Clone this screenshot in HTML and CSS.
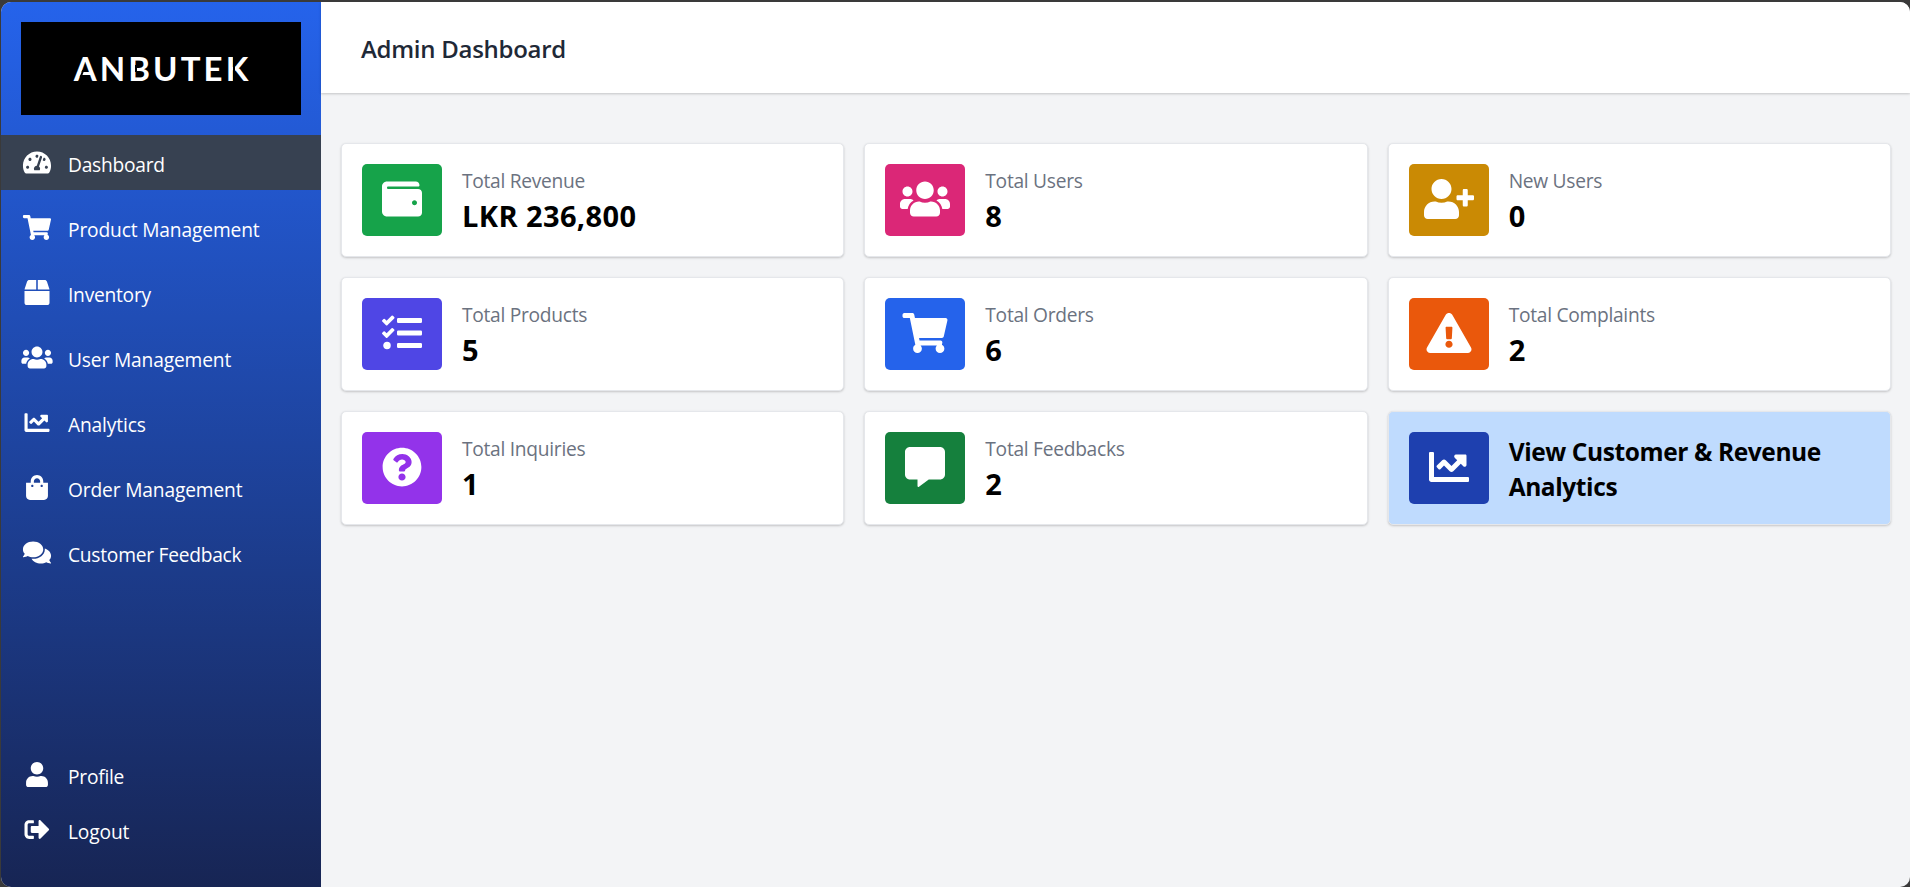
FILE: index.html
```html
<!DOCTYPE html>
<html lang="en">
<head>
<meta charset="utf-8">
<title>Admin Dashboard</title>
<link rel="stylesheet" href="styles.css">
</head>
<body>
<svg class="sprite" aria-hidden="true">
  <symbol id="gauge" viewBox="0 0 576 512"><path d="M288 32C128.94 32 0 160.94 0 320c0 52.8 14.25 102.26 39.06 144.8 5.61 9.62 16.3 15.2 27.44 15.2h443c11.14 0 21.83-5.58 27.44-15.2C561.75 422.26 576 372.8 576 320c0-159.06-128.94-288-288-288zm0 64c14.71 0 26.58 10.13 30.32 23.65-1.11 2.26-2.64 4.23-3.45 6.67l-9.22 27.67c-5.13 3.49-10.97 6.01-17.64 6.01-17.67 0-32-14.33-32-32S270.33 96 288 96zM96 384c-17.67 0-32-14.33-32-32s14.33-32 32-32 32 14.33 32 32-14.33 32-32 32zm48-160c-17.67 0-32-14.33-32-32s14.33-32 32-32 32 14.33 32 32-14.33 32-32 32zm246.77-72.41l-61.33 184C343.13 347.33 352 364.54 352 384c0 11.72-3.38 22.55-8.88 32H232.88c-5.5-9.45-8.88-20.28-8.88-32 0-33.94 26.5-61.43 59.9-63.59l61.34-184.01c4.17-12.56 17.73-19.45 30.36-15.17 12.57 4.19 19.35 17.79 15.17 30.36zm14.66 57.2l15.52-46.55c3.47-1.29 7.13-2.23 11.05-2.23 17.67 0 32 14.33 32 32s-14.33 32-32 32c-11.38-.01-20.89-6.28-26.57-15.22zM480 384c-17.67 0-32-14.33-32-32s14.33-32 32-32 32 14.33 32 32-14.33 32-32 32z"/></symbol>
  <symbol id="cart" viewBox="0 0 576 512"><path d="M528.12 301.319l47.273-208C578.806 78.301 567.391 64 551.99 64H159.208l-9.166-44.81C147.758 8.021 137.93 0 126.529 0H24C10.745 0 0 10.745 0 24v16c0 13.255 10.745 24 24 24h69.883l70.248 343.435C147.325 417.1 136 435.222 136 456c0 30.928 25.072 56 56 56s56-25.072 56-56c0-15.674-6.447-29.835-16.824-40h209.647C430.447 426.165 424 440.326 424 456c0 30.928 25.072 56 56 56s56-25.072 56-56c0-22.172-12.888-41.332-31.579-50.405l5.517-24.276c3.413-15.018-8.002-29.319-23.403-29.319H218.117l-6.545-32h293.145c11.206 0 20.92-7.754 23.403-18.681z"/></symbol>
  <symbol id="box" viewBox="0 0 512 512"><path d="M509.5 184.6L458.9 32.8C452.4 13.2 434.1 0 413.4 0H272v192h238.7c-.4-2.5-.4-5-1.2-7.4zM240 0H98.6c-20.7 0-39 13.2-45.5 32.8L2.5 184.6c-.8 2.4-.8 4.9-1.2 7.4H240V0zM0 224v240c0 26.5 21.5 48 48 48h416c26.5 0 48-21.5 48-48V224H0z"/></symbol>
  <symbol id="users" viewBox="0 0 640 512"><path d="M96 224c35.3 0 64-28.7 64-64s-28.7-64-64-64-64 28.7-64 64 28.7 64 64 64zm448 0c35.3 0 64-28.7 64-64s-28.7-64-64-64-64 28.7-64 64 28.7 64 64 64zm32 32h-64c-17.6 0-33.5 7.1-45.1 18.6 40.3 22.1 68.9 62 75.1 109.4h66c17.7 0 32-14.3 32-32v-32c0-35.3-28.7-64-64-64zm-256 0c61.9 0 112-50.1 112-112S381.9 32 320 32 208 82.1 208 144s50.1 112 112 112zm76.8 32h-8.3c-20.8 10-43.9 16-68.5 16s-47.6-6-68.5-16h-8.3C179.6 288 128 339.6 128 403.2V432c0 26.5 21.5 48 48 48h288c26.5 0 48-21.5 48-48v-28.8c0-63.6-51.6-115.2-115.2-115.2zm-223.7-13.4C161.5 263.1 145.6 256 128 256H64c-35.3 0-64 28.7-64 64v32c0 17.7 14.3 32 32 32h65.9c6.3-47.4 34.9-87.3 75.2-109.4z"/></symbol>
  <symbol id="chart" viewBox="0 0 512 512"><path d="M496 384H64V80c0-8.84-7.16-16-16-16H16C7.16 64 0 71.16 0 80v336c0 17.67 14.33 32 32 32h464c8.84 0 16-7.16 16-16v-32c0-8.84-7.16-16-16-16zM464 96H345.94c-21.38 0-32.09 25.85-16.97 40.97l32.4 32.4L288 242.75l-73.37-73.37c-12.5-12.5-32.76-12.5-45.25 0l-68.69 68.69c-6.25 6.25-6.25 16.38 0 22.63l22.62 22.62c6.25 6.25 16.38 6.25 22.63 0L192 237.25l73.37 73.37c12.5 12.5 32.76 12.5 45.25 0l96-96 32.4 32.4c15.12 15.12 40.97 4.41 40.97-16.97V112c.01-8.84-7.15-16-15.99-16z"/></symbol>
  <symbol id="bag" viewBox="0 0 448 512"><path d="M352 160v-32C352 57.42 294.579 0 224 0 153.42 0 96 57.42 96 128v32H0v272c0 44.183 35.817 80 80 80h288c44.183 0 80-35.817 80-80V160h-96zm-192-32c0-35.29 28.71-64 64-64s64 28.71 64 64v32H160v-32zm160 120c-13.255 0-24-10.745-24-24s10.745-24 24-24 24 10.745 24 24-10.745 24-24 24zm-192 0c-13.255 0-24-10.745-24-24s10.745-24 24-24 24 10.745 24 24-10.745 24-24 24z"/></symbol>
  <symbol id="comments" viewBox="0 0 576 512"><path d="M416 192c0-88.4-93.1-160-208-160S0 103.6 0 192c0 34.3 14.1 65.9 38 92-13.4 30.2-35.5 54.2-35.8 54.5-2.2 2.3-2.8 5.7-1.5 8.7S4.8 352 8 352c36.6 0 66.9-12.3 88.7-25 32.2 15.7 70.3 25 111.3 25 114.9 0 208-71.6 208-160zm122 220c23.9-26 38-57.7 38-92 0-66.9-53.5-124.2-129.3-148.1.9 6.6 1.3 13.3 1.3 20.1 0 105.9-107.7 192-240 192-10.8 0-21.3-.8-31.7-1.9C207.8 439.6 281.8 480 368 480c41 0 79.1-9.2 111.3-25 21.8 12.7 52.1 25 88.7 25 3.2 0 6.1-1.9 7.3-4.8 1.3-2.9.7-6.3-1.5-8.7-.3-.3-22.4-24.2-35.8-54.5z"/></symbol>
  <symbol id="user" viewBox="0 0 448 512"><path d="M224 256c70.7 0 128-57.3 128-128S294.7 0 224 0 96 57.3 96 128s57.3 128 128 128zm89.6 32h-16.7c-22.2 10.2-46.9 16-72.9 16s-50.6-5.8-72.9-16h-16.7C60.2 288 0 348.2 0 422.4V464c0 26.5 21.5 48 48 48h352c26.5 0 48-21.5 48-48v-41.6c0-74.2-60.2-134.4-134.4-134.4z"/></symbol>
  <symbol id="signout" viewBox="0 0 512 512"><path d="M497 273L329 441c-15 15-41 4.5-41-17v-96H152c-13.3 0-24-10.7-24-24v-96c0-13.3 10.7-24 24-24h136V88c0-21.4 25.9-32 41-17l168 168c9.3 9.4 9.3 24.6 0 34zM192 436v-40c0-6.6-5.4-12-12-12H96c-17.7 0-32-14.3-32-32V160c0-17.7 14.3-32 32-32h84c6.6 0 12-5.4 12-12V76c0-6.6-5.4-12-12-12H96c-53 0-96 43-96 96v192c0 53 43 96 96 96h84c6.6 0 12-5.4 12-12z"/></symbol>
  <symbol id="wallet" viewBox="0 0 512 512"><path d="M461.2 128H80c-8.84 0-16-7.16-16-16s7.16-16 16-16h384c8.84 0 16-7.16 16-16 0-26.51-21.49-48-48-48H64C28.65 32 0 60.65 0 96v320c0 35.35 28.65 64 64 64h397.2c28.02 0 50.8-21.53 50.8-48V176c0-26.47-22.78-48-50.8-48zM416 336c-17.67 0-32-14.33-32-32s14.33-32 32-32 32 14.33 32 32-14.33 32-32 32z"/></symbol>
  <symbol id="userplus" viewBox="0 0 640 512"><path d="M624 208h-64v-64c0-8.8-7.2-16-16-16h-32c-8.8 0-16 7.2-16 16v64h-64c-8.8 0-16 7.2-16 16v32c0 8.8 7.2 16 16 16h64v64c0 8.8 7.2 16 16 16h32c8.8 0 16-7.2 16-16v-64h64c8.8 0 16-7.2 16-16v-32c0-8.8-7.2-16-16-16zm-400 48c70.7 0 128-57.3 128-128S294.7 0 224 0 96 57.3 96 128s57.3 128 128 128zm89.6 32h-16.7c-22.2 10.2-46.9 16-72.9 16s-50.6-5.8-72.9-16h-16.7C60.2 288 0 348.2 0 422.4V464c0 26.5 21.5 48 48 48h352c26.5 0 48-21.5 48-48v-41.6c0-74.2-60.2-134.4-134.4-134.4z"/></symbol>
  <symbol id="tasks" viewBox="0 0 512 512"><path d="M139.61 35.5a12 12 0 0 0-17 0L58.93 98.81l-22.7-22.12a12 12 0 0 0-17 0L3.53 92.41a12 12 0 0 0 0 17l47.59 47.4a12.78 12.78 0 0 0 17.61 0l15.59-15.62L156.52 69a12.09 12.09 0 0 0 .09-17zm0 159.19a12 12 0 0 0-17 0l-63.68 63.72-22.7-22.1a12 12 0 0 0-17 0L3.53 252a12 12 0 0 0 0 17L51 316.5a12.77 12.77 0 0 0 17.6 0l15.7-15.69 72.2-72.22a12 12 0 0 0 .09-16.9zM64 368c-26.49 0-48.59 21.5-48.59 48S37.53 464 64 464a48 48 0 0 0 0-96zm432 16H208a16 16 0 0 0-16 16v32a16 16 0 0 0 16 16h288a16 16 0 0 0 16-16v-32a16 16 0 0 0-16-16zm0-320H208a16 16 0 0 0-16 16v32a16 16 0 0 0 16 16h288a16 16 0 0 0 16-16V80a16 16 0 0 0-16-16zm0 160H208a16 16 0 0 0-16 16v32a16 16 0 0 0 16 16h288a16 16 0 0 0 16-16v-32a16 16 0 0 0-16-16z"/></symbol>
  <symbol id="warning" viewBox="0 0 576 512"><path d="M569.517 440.013C587.975 472.007 564.806 512 527.94 512H48.054c-36.937 0-59.999-40.055-41.577-71.987L246.423 23.985c18.467-32.009 64.72-31.951 83.154 0l239.94 416.028zM288 354c-25.405 0-46 20.595-46 46s20.595 46 46 46 46-20.595 46-46-20.595-46-46-46zm-43.673-165.346l7.418 136c.347 6.364 5.609 11.346 11.982 11.346h48.546c6.373 0 11.635-4.982 11.982-11.346l7.418-136c.375-6.874-5.098-12.654-11.982-12.654h-63.383c-6.884 0-12.356 5.78-11.981 12.654z"/></symbol>
  <symbol id="question" viewBox="0 0 512 512"><path d="M504 256c0 136.997-111.043 248-248 248S8 392.997 8 256C8 119.083 119.043 8 256 8s248 111.083 248 248zM262.655 90c-54.497 0-89.255 22.957-116.549 63.758-3.536 5.286-2.353 12.415 2.715 16.258l34.699 26.31c5.205 3.947 12.621 3.008 16.665-2.122 17.864-22.658 30.113-35.797 57.303-35.797 20.429 0 45.698 13.148 45.698 32.958 0 14.976-12.363 22.667-32.534 33.976C247.128 238.528 216 254.941 216 296v4c0 6.627 5.373 12 12 12h56c6.627 0 12-5.373 12-12v-1.333c0-28.462 83.186-29.647 83.186-106.667 0-58.002-60.165-102-116.531-102zM256 338c-25.365 0-46 20.635-46 46 0 25.364 20.635 46 46 46s46-20.636 46-46c0-25.365-20.635-46-46-46z"/></symbol>
  <symbol id="comment" viewBox="0 0 512 512"><path d="M448 0H64C28.7 0 0 28.7 0 64v288c0 35.3 28.7 64 64 64h96v84c0 9.8 11.2 15.5 19.1 9.7L304 416h144c35.3 0 64-28.7 64-64V64c0-35.3-28.7-64-64-64z"/></symbol>
</svg>
<div class="window">
  <aside class="sidebar">
    <div class="logo"><span class="wordmark"><span class="cut cut-a">A</span>N<span class="cut cut-b">B</span>UTE<span class="cut cut-k">K</span></span></div>
    <nav class="nav">
      <a class="item active"><svg class="icon"><use href="#gauge"/></svg><span>Dashboard</span></a>
      <a class="item"><svg class="icon"><use href="#cart"/></svg><span class="wide">Product Management</span></a>
      <a class="item"><svg class="icon"><use href="#box"/></svg><span>Inventory</span></a>
      <a class="item"><svg class="icon"><use href="#users"/></svg><span class="wide">User Management</span></a>
      <a class="item"><svg class="icon"><use href="#chart"/></svg><span class="wide">Analytics</span></a>
      <a class="item"><svg class="icon"><use href="#bag"/></svg><span class="wide">Order Management</span></a>
      <a class="item"><svg class="icon"><use href="#comments"/></svg><span>Customer Feedback</span></a>
    </nav>
    <div class="account">
      <a class="item"><svg class="icon"><use href="#user"/></svg><span>Profile</span></a>
      <a class="item"><svg class="icon"><use href="#signout"/></svg><span class="wide">Logout</span></a>
    </div>
  </aside>
  <div class="content">
    <header class="header"><h1 class="title">Admin Dashboard</h1></header>
    <main class="grid">
      <section class="card"><div class="badge green"><svg class="glyph"><use href="#wallet"/></svg></div><div class="stat"><p class="label">Total Revenue</p><p class="value">LKR 236,800</p></div></section>
      <section class="card"><div class="badge pink"><svg class="glyph"><use href="#users"/></svg></div><div class="stat"><p class="label">Total Users</p><p class="value">8</p></div></section>
      <section class="card"><div class="badge yellow"><svg class="glyph"><use href="#userplus"/></svg></div><div class="stat"><p class="label">New Users</p><p class="value">0</p></div></section>
      <section class="card"><div class="badge indigo"><svg class="glyph"><use href="#tasks"/></svg></div><div class="stat"><p class="label">Total Products</p><p class="value">5</p></div></section>
      <section class="card"><div class="badge blue"><svg class="glyph"><use href="#cart"/></svg></div><div class="stat"><p class="label">Total Orders</p><p class="value">6</p></div></section>
      <section class="card"><div class="badge orange"><svg class="glyph"><use href="#warning"/></svg></div><div class="stat"><p class="label">Total Complaints</p><p class="value">2</p></div></section>
      <section class="card"><div class="badge purple"><svg class="glyph"><use href="#question"/></svg></div><div class="stat"><p class="label">Total Inquiries</p><p class="value">1</p></div></section>
      <section class="card"><div class="badge forest"><svg class="glyph"><use href="#comment"/></svg></div><div class="stat"><p class="label">Total Feedbacks</p><p class="value">2</p></div></section>
      <section class="card link"><div class="badge navy"><svg class="glyph"><use href="#chart"/></svg></div><p class="cta">View Customer &amp; Revenue Analytics</p></section>
    </main>
  </div>
</div>
</body>
</html>
```
FILE: styles.css
```css
* { box-sizing: border-box; margin: 0; padding: 0; }
body {
  height: 887px;
  padding: 2px 0 0 1px;
  background: #3a3a3a;
  font-family: "Open Sans", "Noto Sans", sans-serif;
  overflow: hidden;
}
.sprite { display: none; }
.window {
  display: flex;
  height: 885px;
  border-radius: 10px;
  overflow: hidden;
  background: #f3f4f6;
}
.sidebar {
  display: flex;
  flex-direction: column;
  width: 320px;
  padding: 20px 0 30px;
  background: linear-gradient(to bottom, #2563eb, #172554);
  color: #fff;
}
.logo {
  display: flex;
  align-items: center;
  justify-content: center;
  width: 280px;
  height: 93px;
  margin: 0 20px 20px;
  padding-bottom: 2px;
  background: #000;
}
.wordmark {
  margin-right: -3px;
  font: 700 33px/40px Lato, sans-serif;
  letter-spacing: 3.1px;
}
/* Stencil gaps in the wordmark letters */
.cut { position: relative; }
.cut::after {
  content: "";
  position: absolute;
  width: 2px;
  background: #000;
}
.cut-a::after { left: 7px; top: 22px; height: 7px; transform: skewX(-20deg); }
.cut-b::after { left: 7px; top: 17px; height: 7px; }
.cut-k::after { left: 7px; top: 8px; height: 26px; }
.nav { display: flex; flex-direction: column; gap: 10px; }
.account { margin-top: auto; }
.item {
  display: flex;
  align-items: flex-start;
  gap: 15px;
  height: 55px;
  padding: 15px 20px 0;
  font-size: 19.2px;
  line-height: 30px;
  letter-spacing: -0.25px;
}
.wide { letter-spacing: -0.15px; }
.item.active { background: #374151; }
.icon { width: 32px; height: 25px; fill: #fff; }
.content { flex: 1; }
.header {
  height: 91px;
  padding: 28px 40px 0;
  background: #fff;
  box-shadow: 0 1px 3px rgba(0, 0, 0, .1), 0 1px 2px rgba(0, 0, 0, .1);
}
.title {
  color: #1f2937;
  font-size: 24px;
  font-weight: 600;
  line-height: 38px;
  letter-spacing: -0.28px;
}
.grid {
  display: grid;
  grid-template-columns: repeat(3, 1fr);
  gap: 20px;
  padding: 50px 19px 0 20px;
}
.card {
  display: flex;
  align-items: center;
  gap: 20px;
  height: 114px;
  padding: 20px;
  background: #fff;
  border: 1px solid #e5e7eb;
  border-radius: 5px;
  box-shadow: 0 1px 3px rgba(0, 0, 0, .1), 0 1px 2px rgba(0, 0, 0, .1);
}
.card.link { background: #bfdbfe; }
.badge {
  flex: none;
  width: 80px;
  height: 72px;
  padding-top: 15px;
  border-radius: 5px;
}
.glyph { display: block; width: 50px; height: 40px; margin: 0 auto; fill: #fff; }
.green { background: #16a34a; }
.pink { background: #db2777; }
.yellow { background: #ca8a04; }
.indigo { background: #4f46e5; }
.blue { background: #2563eb; }
.orange { background: #ea580c; }
.purple { background: #9333ea; }
.forest { background: #15803d; }
.navy { background: #1e40af; }
.stat { padding-top: 2px; }
.label {
  color: #6b7280;
  font-size: 19.2px;
  line-height: 30px;
  letter-spacing: -0.28px;
}
.value {
  font-size: 29px;
  font-weight: 700;
  line-height: 40px;
  letter-spacing: 0.4px;
}
.cta {
  padding-top: 2px;
  font-size: 24.5px;
  font-weight: 700;
  line-height: 35px;
  letter-spacing: -0.4px;
}
```
